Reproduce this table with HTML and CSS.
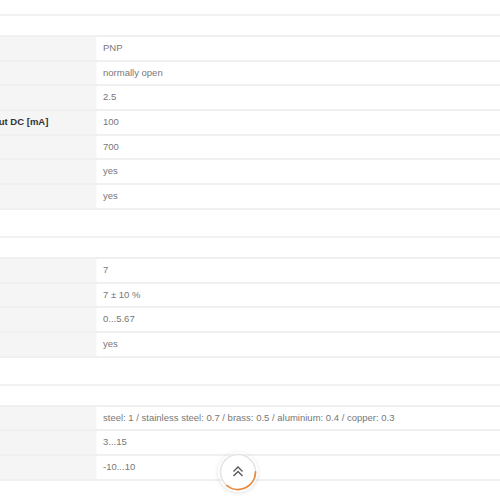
FILE: index.html
```html
<!DOCTYPE html>
<html lang="en">
<head>
    <meta charset="UTF-8">
    <title>Technical data</title>
    <link rel="stylesheet" href="styles.css">
</head>
<body>
    <div class="sheet">
        <div class="section-head">Outputs</div>
        <div class="data-table">
            <div class="row"><div class="label">Electrical design</div><div class="value">PNP</div></div>
            <div class="row"><div class="label">Output function</div><div class="value">normally open</div></div>
            <div class="row"><div class="label">Max. voltage drop switching output DC [V]</div><div class="value">2.5</div></div>
            <div class="row"><div class="label">Permanent current rating of switching output DC [mA]</div><div class="value">100</div></div>
            <div class="row"><div class="label">Switching frequency DC [Hz]</div><div class="value">700</div></div>
            <div class="row"><div class="label">Short-circuit protection</div><div class="value">yes</div></div>
            <div class="row"><div class="label">Overload protection</div><div class="value">yes</div></div>
        </div>

        <div class="section-head">Monitoring range</div>
        <div class="data-table">
            <div class="row"><div class="label">Sensing range [mm]</div><div class="value">7</div></div>
            <div class="row"><div class="label">Real sensing range Sr [mm]</div><div class="value">7 ± 10 %</div></div>
            <div class="row"><div class="label">Operating distance [mm]</div><div class="value">0...5.67</div></div>
            <div class="row"><div class="label">Non-flush mountable</div><div class="value">yes</div></div>
        </div>

        <div class="section-head">Accuracy / deviations</div>
        <div class="data-table">
            <div class="row"><div class="label">Correction factor</div><div class="value">steel: 1 / stainless steel: 0.7 / brass: 0.5 / aluminium: 0.4 / copper: 0.3</div></div>
            <div class="row"><div class="label">Hysteresis [% of Sr]</div><div class="value">3...15</div></div>
            <div class="row"><div class="label">Switch point drift [% of Sr]</div><div class="value">-10...10</div></div>
        </div>
    </div>

    <a class="to-top" href="#">
        <svg width="40" height="40" viewBox="0 0 40 40">
            <circle cx="20" cy="20" r="17.5" fill="#fff" stroke="#e4e4e4" stroke-width="1.5"/>
            <path d="M37.5 20 A17.5 17.5 0 0 1 9 33.6" fill="none" stroke="#ec8a3c" stroke-width="1.8" stroke-linecap="round"/>
            <path d="M15.5 19.5 L20 15 L24.5 19.5 M15.5 24 L20 19.5 L24.5 24" fill="none" stroke="#555" stroke-width="1.3"/>
        </svg>
    </a>
</body>
</html>
```

FILE: styles.css
```css
body {
    margin: 0;
    background: #fff;
    font-family: 'Liberation Sans', Arial, sans-serif;
    overflow: hidden;
    height: 500px;
}
.sheet {
    width: 1200px;
    margin: -12px 0 0 -206px;
}
.section-head {
    height: 28px;
    box-sizing: border-box;
    border-bottom: 2px solid #f1f1f1;
    margin-bottom: 19px;
    padding: 6px 10px 0;
    font-size: 13px;
    font-weight: bold;
    color: #333;
}
.data-table {
    border-bottom: 2px solid #f0f0f0;
}
.row {
    display: grid;
    grid-template-columns: 303px 1fr;
    height: 24.7px;
    box-sizing: border-box;
    border-top: 2px solid #f0f0f0;
    font-size: 9.5px;
}
.label {
    background: #f5f5f5;
    color: #333;
    font-weight: bold;
    padding: 5px 10px 0;
    white-space: nowrap;
    border-right: 1px solid #fbfbfb;
}
.value {
    color: #777;
    padding: 5px 6px 0;
    white-space: nowrap;
}
.to-top {
    position: fixed;
    left: 218px;
    top: 452px;
    width: 40px;
    height: 40px;
    border-radius: 50%;
    box-shadow: 0 1px 4px rgba(0, 0, 0, 0.12);
    display: block;
}
```
